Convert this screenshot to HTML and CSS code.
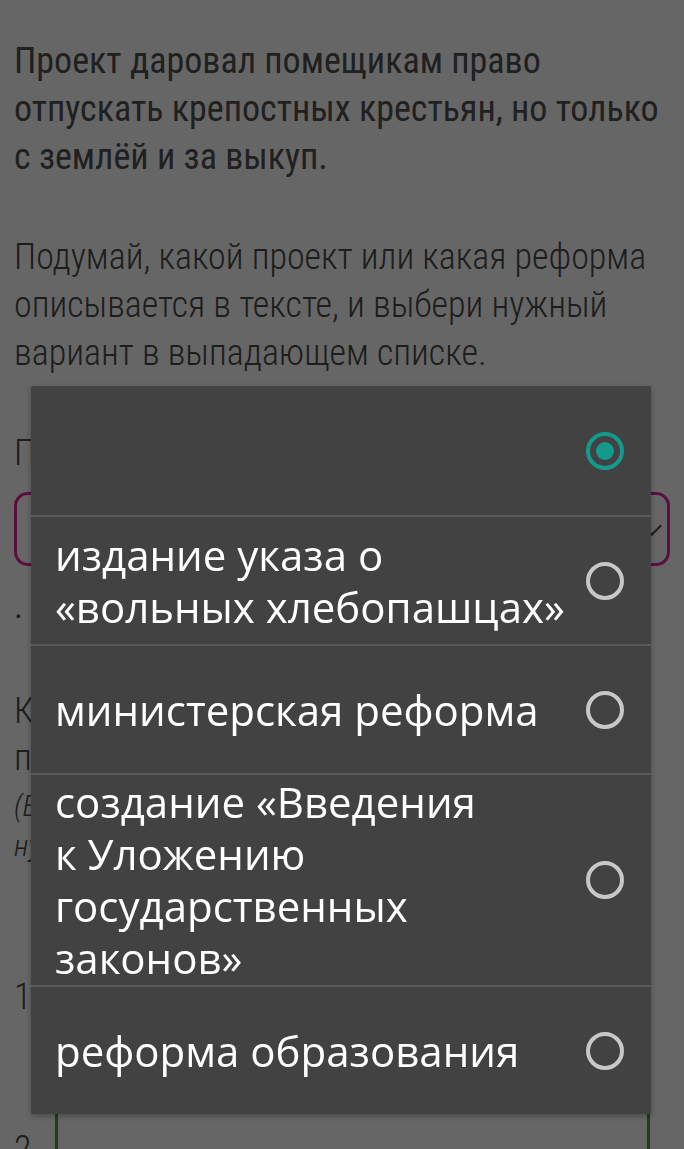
FILE: index.html
```html
<!DOCTYPE html>
<html lang="ru">
<head>
  <meta charset="UTF-8">
  <meta name="viewport" content="width=device-width, initial-scale=1.0">
  <title>Задание</title>
  <link rel="stylesheet" href="styles.css">
</head>
<body>
  <div class="task">
    <p class="text">Проект даровал помещикам право отпускать крепостных крестьян, но только с землёй и за выкуп.</p>
    <p class="hint">Подумай, какой проект или какая реформа описывается в тексте, и выбери нужный вариант в выпадающем списке.</p>

    <p class="label">Проект или реформа:</p>
    <div class="select">
      <span class="chevron"></span>
    </div>
    <p class="dot">.</p>

    <p class="hint question">Какие ещё реформы были проведены в правление Павла I и Александра I?</p>
    <p class="note">(Впиши номера вариантов из списка в поля ниже в нужном порядке.)</p>

    <div class="answers">
      <div class="answer"><span class="num">1</span><div class="field"></div></div>
      <div class="answer"><span class="num">2</span><div class="field"></div></div>
    </div>
  </div>

  <div class="overlay">
    <div class="picker">
      <div class="option">
        <span class="option-text"></span>
        <span class="radio checked"></span>
      </div>
      <div class="option">
        <span class="option-text">издание указа о «вольных хлебопашцах»</span>
        <span class="radio"></span>
      </div>
      <div class="option">
        <span class="option-text">министерская реформа</span>
        <span class="radio"></span>
      </div>
      <div class="option">
        <span class="option-text">создание «Введения к&nbsp;Уложению государственных законов»</span>
        <span class="radio"></span>
      </div>
      <div class="option">
        <span class="option-text">реформа образования</span>
        <span class="radio"></span>
      </div>
    </div>
  </div>
</body>
</html>
```

FILE: styles.css
```css
body {
  margin: 0;
  background: #fff;
  font-family: "Roboto Condensed", "Liberation Sans Narrow", "DejaVu Sans Condensed", sans-serif;
  color: #4a4a4a;
  overflow: hidden;
}

.task {
  padding: 37px 14px 0 14px;
}

.text,
.hint {
  font-size: 36px;
  line-height: 48px;
  margin: 0 0 52px 0;
}

.text {
  color: #505050;
}

.hint {
  font-weight: 300;
}

.label {
  font-size: 36px;
  font-weight: 300;
  margin: 0 0 15px 0;
  line-height: 48px;
}

.select {
  height: 68px;
  border: 3px solid #e0269a;
  border-radius: 14px;
  position: relative;
}

.chevron {
  position: absolute;
  right: 8px;
  top: 24px;
  width: 12px;
  height: 12px;
  border-right: 2px solid #4a4a4a;
  border-bottom: 2px solid #4a4a4a;
  transform: rotate(45deg);
}

.dot {
  margin: 20px 0 62px 0;
  font-size: 34px;
  line-height: 40px;
}

.question {
  margin-bottom: 0;
  line-height: 47px;
}

.note {
  margin: 4px 0 91px 0;
  font-size: 30px;
  line-height: 40px;
  font-style: italic;
  font-weight: 300;
}

.answers {
  display: flex;
  flex-direction: column;
  gap: 72px;
}

.answer {
  display: flex;
  align-items: center;
  font-size: 36px;
  font-weight: 300;
}

.num {
  flex: none;
  width: 41px;
}

.field {
  flex: 1;
  height: 74px;
  margin-right: 20px;
  border: 3px solid #4ea028;
  border-radius: 6px;
}

.overlay {
  position: fixed;
  inset: 0;
  background: rgba(0, 0, 0, 0.6);
}

.picker {
  position: absolute;
  top: 386px;
  left: 31px;
  width: 620px;
  background: #424242;
  border-radius: 2px;
  box-shadow: 0 2px 6px rgba(0, 0, 0, 0.3);
  font-family: "Open Sans", "Noto Sans", sans-serif;
  color: #fff;
}

.option {
  display: flex;
  align-items: center;
  justify-content: space-between;
  min-height: 129px;
  padding: 1px 27px 1px 24px;
  box-sizing: border-box;
  border-top: 2px solid #5a5a5a;
}

.option:first-child {
  border-top: none;
}

.option-text {
  font-size: 42px;
  line-height: 52px;
  padding-right: 20px;
}

.radio {
  flex: none;
  width: 30px;
  height: 30px;
  border: 4px solid #c8c8c8;
  border-radius: 50%;
  position: relative;
}

.radio.checked {
  border-color: #139a8c;
}

.radio.checked::after {
  content: "";
  position: absolute;
  left: 6px;
  top: 6px;
  width: 18px;
  height: 18px;
  border-radius: 50%;
  background: #139a8c;
}
```
